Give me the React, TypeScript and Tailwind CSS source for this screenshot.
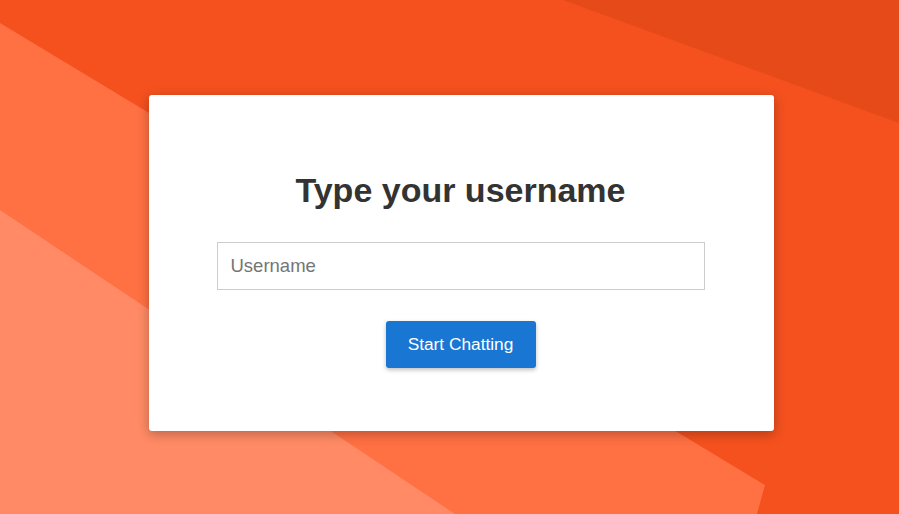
import { useState } from 'react';

function Backdrop() {
  return (
    <svg
      className="absolute inset-0 h-full w-full"
      viewBox="0 0 899 514"
      preserveAspectRatio="none"
      aria-hidden="true"
    >
      <rect x="0" y="0" width="899" height="514" fill="#F4511E" />
      <polygon points="563,0 899,0 899,123" fill="#E64A19" />
      <polygon points="0,23 765,485 757,514 0,514" fill="#FF7043" />
      <polygon points="0,210 455,514 0,514" fill="#FF8A65" />
    </svg>
  );
}

export default function App() {
  const [username, setUsername] = useState('');

  return (
    <div className="relative h-screen w-full overflow-hidden font-['Liberation_Sans',Arial,sans-serif]">
      <Backdrop />

      {/* Login card */}
      <div className="relative pt-[95px] pl-[149px]">
        <div className="flex w-[625px] flex-col items-center rounded-[3px] bg-white pt-[75px] pr-[2px] pb-[63px] shadow-[0_3px_12px_rgba(0,0,0,0.28)]">
          <h2 className="text-[34px] leading-[40px] font-bold text-[#333333]">Type your username</h2>

          <input
            type="text"
            value={username}
            onChange={(e) => setUsername(e.target.value)}
            placeholder="Username"
            className="mt-[32px] h-[48px] w-[488px] border border-[#cccccc] bg-white px-[13px] text-[18.5px] text-[#333333] outline-none placeholder:text-[#757575]"
          />

          <button className="mt-[31px] h-[47px] w-[150px] rounded-[3px] bg-[#1976D2] text-[17.3px] text-white shadow-[0_2px_4px_rgba(0,0,0,0.25)]">
            Start Chatting
          </button>
        </div>
      </div>
    </div>
  );
}
